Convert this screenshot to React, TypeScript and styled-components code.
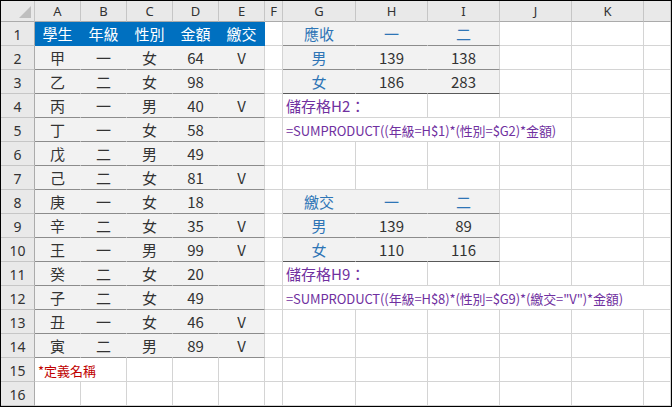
import React from "react";
import styled, { createGlobalStyle } from "styled-components";

const Global = createGlobalStyle`
  html, body { margin: 0; padding: 0; background: #fff; }
  * { box-sizing: border-box; }
`;

const Sheet = styled.div`
  width: 672px;
  height: 407px;
  border: 1px solid #000;
  display: grid;
  grid-template-columns: 34px 46px 46px 46px 46px 46px 18px 73px 72px 72px 72px 72px 1fr;
  grid-template-rows: 21px repeat(16, 24px);
  font-family: "Noto Sans CJK TC", "Noto Sans", sans-serif;
  font-size: 15px;
  color: #333;
  overflow: hidden;
`;

const ColHead = styled.div`
  background: #e9e9e9;
  border-right: 1px solid #c6c6c6;
  border-bottom: 1px solid #ababab;
  display: flex;
  align-items: center;
  justify-content: center;
  font-family: "Noto Sans", sans-serif;
  font-size: 13px;
  color: #333;
`;

const Corner = styled(ColHead)`
  position: relative;
  &::after {
    content: "";
    position: absolute;
    right: 3px;
    bottom: 3px;
    border-left: 12px solid transparent;
    border-bottom: 12px solid #bfbfbf;
  }
`;

const RowHead = styled(ColHead)`
  border-right: 1px solid #ababab;
  border-bottom: 1px solid #c6c6c6;
  align-items: flex-end;
  padding-bottom: 1px;
  font-size: 14px;
`;

type Kind = "plain" | "head" | "data" | "box" | "boxlast" | "note" | "formula";

const filled = (k: Kind) => k === "data" || k === "box" || k === "boxlast";

const Cell = styled.div<{ $kind: Kind; $span?: number; $align?: string; $color?: string }>`
  grid-column: span ${(p) => p.$span ?? 1};
  min-width: 0;
  display: flex;
  align-items: flex-end;
  padding: 0 3px 1px;
  justify-content: ${(p) => p.$align ?? "center"};
  white-space: nowrap;
  overflow: visible;
  color: ${(p) => (p.$kind === "head" ? "#fff" : p.$color ?? "#333")};
  background: ${(p) => (p.$kind === "head" ? "#0070c0" : filled(p.$kind) ? "#f2f2f2" : "#fff")};
  border-right: 1px solid ${(p) => (p.$kind === "head" ? "#0070c0" : filled(p.$kind) ? "#f2f2f2" : "#d4d4d4")};
  border-bottom: 1px solid
    ${(p) =>
      p.$kind === "head" ? "#0070c0" : p.$kind === "data" || p.$kind === "box" ? "#8c8c8c" : p.$kind === "boxlast" ? "#595959" : "#d4d4d4"};
  font-size: ${(p) => (p.$kind === "note" ? "13px" : p.$kind === "formula" ? "13px" : "15px")};
  letter-spacing: ${(p) => (p.$kind === "formula" ? "-0.1px" : "0")};
`;

const EdgeCell = styled(Cell)`
  border-right-color: #d4d4d4;
`;

const BLUE = "#2e75b6";
const PURPLE = "#7030a0";
const RED = "#c00000";

const students: string[][] = [
  ["甲", "一", "女", "64", "V"],
  ["乙", "二", "女", "98", ""],
  ["丙", "一", "男", "40", "V"],
  ["丁", "一", "女", "58", ""],
  ["戊", "二", "男", "49", ""],
  ["己", "二", "女", "81", "V"],
  ["庚", "一", "女", "18", ""],
  ["辛", "二", "女", "35", "V"],
  ["王", "一", "男", "99", "V"],
  ["癸", "二", "女", "20", ""],
  ["子", "二", "女", "49", ""],
  ["丑", "一", "女", "46", "V"],
  ["寅", "二", "男", "89", "V"],
];

type Spec = { text?: string; kind?: Kind; span?: number; align?: string; color?: string; edge?: boolean };

const E = (n: number): Spec[] => Array.from({ length: n }, () => ({}));

function rightPart(r: number): Spec[] {
  const box = (text: string, color: string, last: boolean): Spec => ({ text, color, kind: last ? "boxlast" : "box" });
  switch (r) {
    case 1:
      return [box("應收", BLUE, false), box("一", BLUE, false), { ...box("二", BLUE, false), edge: true }, ...E(3)];
    case 2:
      return [box("男", BLUE, false), box("139", "#333", false), { ...box("138", "#333", false), edge: true }, ...E(3)];
    case 3:
      return [box("女", BLUE, true), box("186", "#333", true), { ...box("283", "#333", true), edge: true }, ...E(3)];
    case 4:
      return [{ text: "儲存格H2：", color: PURPLE, span: 2, align: "flex-start" }, ...E(4)];
    case 5:
      return [{ text: "=SUMPRODUCT((年級=H$1)*(性別=$G2)*金額)", kind: "formula", color: PURPLE, span: 4, align: "flex-start" }, ...E(2)];
    case 8:
      return [box("繳交", BLUE, false), box("一", BLUE, false), { ...box("二", BLUE, false), edge: true }, ...E(3)];
    case 9:
      return [box("男", BLUE, false), box("139", "#333", false), { ...box("89", "#333", false), edge: true }, ...E(3)];
    case 10:
      return [box("女", BLUE, true), box("110", "#333", true), { ...box("116", "#333", true), edge: true }, ...E(3)];
    case 11:
      return [{ text: "儲存格H9：", color: PURPLE, span: 2, align: "flex-start" }, ...E(4)];
    case 12:
      return [{ text: "=SUMPRODUCT((年級=H$8)*(性別=$G9)*(繳交=\"V\")*金額)", kind: "formula", color: PURPLE, span: 6, align: "flex-start" }];
    default:
      return E(6);
  }
}

function leftPart(r: number): Spec[] {
  if (r === 1) return ["學生", "年級", "性別", "金額", "繳交"].map((t) => ({ text: t, kind: "head" as Kind }));
  if (r >= 2 && r <= 14) {
    return students[r - 2].map((t, i) => ({ text: t, kind: "data" as Kind, edge: i === 4 }));
  }
  if (r === 15) return [{ text: "*定義名稱", kind: "note", span: 2, align: "flex-start", color: RED }, ...E(3)];
  return E(5);
}

const cols = ["A", "B", "C", "D", "E", "F", "G", "H", "I", "J", "K", ""];

export default function App() {
  const rows = Array.from({ length: 16 }, (_, i) => i + 1);
  return (
    <>
      <Global />
      <Sheet>
        <Corner />
        {cols.map((c, i) => (
          <ColHead key={i}>{c}</ColHead>
        ))}
        {rows.map((r) => {
          const specs = [...leftPart(r), {} as Spec, ...rightPart(r)];
          return (
            <React.Fragment key={r}>
              <RowHead>{r}</RowHead>
              {specs.map((s, i) => {
                const C = s.edge ? EdgeCell : Cell;
                return (
                  <C key={i} $kind={s.kind ?? "plain"} $span={s.span} $align={s.align} $color={s.color}>
                    {s.text}
                  </C>
                );
              })}
            </React.Fragment>
          );
        })}
      </Sheet>
    </>
  );
}
